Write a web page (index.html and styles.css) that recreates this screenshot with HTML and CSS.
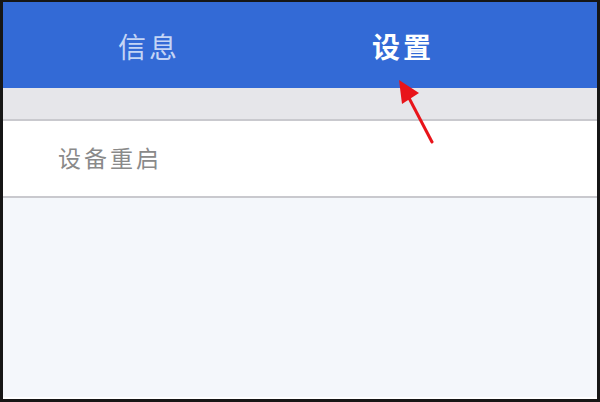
FILE: index.html
```html
<!DOCTYPE html>
<html lang="zh-CN">
<head>
    <meta charset="UTF-8">
    <meta name="viewport" content="width=device-width, initial-scale=1.0">
    <title>设置</title>
    <link rel="stylesheet" href="styles.css">
</head>
<body>
    <div class="screen">
        <div class="tab-bar">
            <div class="tab">信息</div>
            <div class="tab active">设置</div>
        </div>

        <div class="spacer"></div>

        <div class="list">
            <div class="list-item">设备重启</div>
        </div>

        <div class="page-bg"></div>

        <!-- annotation arrow pointing at the active tab -->
        <svg class="arrow" width="60" height="70" viewBox="0 0 60 70">
            <line x1="45" y1="64" x2="22" y2="20" stroke="#e8141a" stroke-width="3" stroke-linecap="round"/>
            <polygon points="12,2 32,15 15,26" fill="#e8141a"/>
        </svg>
    </div>
</body>
</html>
```

FILE: styles.css
```css
html, body {
    margin: 0;
    height: 100%;
}
body {
    background-color: #161616;
    font-family: "Noto Sans CJK SC", "Noto Sans", sans-serif;
}
.screen {
    position: relative;
    margin: 2px 3px 0 3px;
    height: 397px;
    display: flex;
    flex-direction: column;
    background-color: #f4f7fb;
    overflow: hidden;
}
.tab-bar {
    height: 86px;
    background-color: #336ad6;
    display: flex;
    align-items: center;
    padding-left: 115px;
}
.tab {
    flex-shrink: 0;
    font-size: 28px;
    letter-spacing: 3px;
    color: #c4d5f5;
    width: 254px;
    line-height: 1;
    margin-top: 2px;
}
.tab.active {
    color: #ffffff;
    font-weight: bold;
}
.spacer {
    height: 31px;
    background-color: #e6e6ea;
}
.list {
    background-color: #ffffff;
    border-top: 2px solid #c9c9ce;
    border-bottom: 2px solid #c9c9ce;
}
.list-item {
    height: 75px;
    box-sizing: border-box;
    padding: 0 0 4px 55px;
    display: flex;
    align-items: center;
    font-size: 23px;
    letter-spacing: 3px;
    color: #8a8a8a;
}
.page-bg {
    flex: 1;
    border-bottom: 2px solid #ffffff;
}
.arrow {
    position: absolute;
    left: 384px;
    top: 76px;
}
```
